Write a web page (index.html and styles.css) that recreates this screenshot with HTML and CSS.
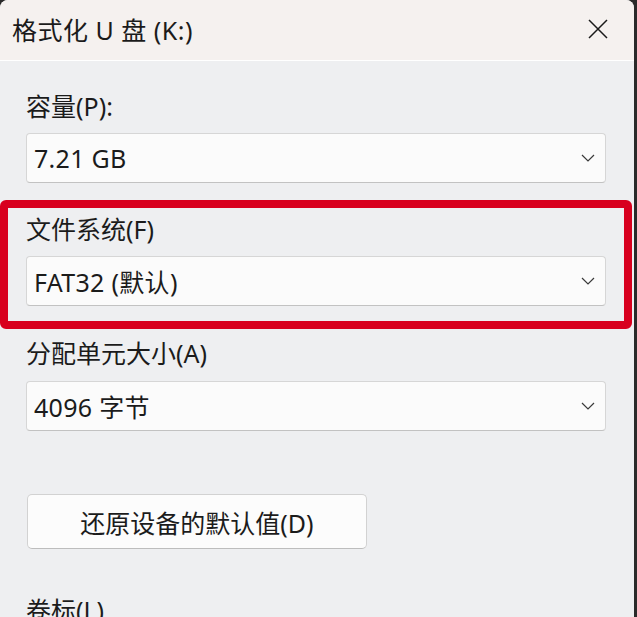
FILE: index.html
```html
<!DOCTYPE html>
<html lang="zh-CN">
<head>
  <meta charset="UTF-8">
  <title>格式化 U 盘 (K:)</title>
  <link rel="stylesheet" href="styles.css">
</head>
<body>

  <div class="window">
    <div class="titlebar">
      <span class="title">格式化 U 盘 (K:)</span>
      <svg class="close" width="20" height="20" viewBox="0 0 20 20">
        <path d="M1 1 L19 19 M19 1 L1 19" stroke="#1a1a1a" stroke-width="1.5" fill="none" />
      </svg>
    </div>

    <div class="content">
      <div class="field first">
        <label>容量(P):</label>
        <div class="select">
          <span>7.21 GB</span>
          <svg width="14" height="8" viewBox="0 0 14 8"><path d="M1 1 L7 7 L13 1" stroke="#3a3a3a" stroke-width="1.2" fill="none" /></svg>
        </div>
      </div>

      <div class="field highlight">
        <label>文件系统(F)</label>
        <div class="select">
          <span>FAT32 (默认)</span>
          <svg width="14" height="8" viewBox="0 0 14 8"><path d="M1 1 L7 7 L13 1" stroke="#3a3a3a" stroke-width="1.2" fill="none" /></svg>
        </div>
      </div>

      <div class="field unit">
        <label>分配单元大小(A)</label>
        <div class="select">
          <span>4096 字节</span>
          <svg width="14" height="8" viewBox="0 0 14 8"><path d="M1 1 L7 7 L13 1" stroke="#3a3a3a" stroke-width="1.2" fill="none" /></svg>
        </div>
      </div>

      <div class="field">
        <button class="restore">还原设备的默认值(D)</button>
      </div>

      <div class="field volume">
        <label>卷标(L)</label>
      </div>
    </div>
  </div>

</body>
</html>
```

FILE: styles.css
```css
html, body {
  margin: 0;
  padding: 0;
  height: 100%;
  overflow: hidden;
}
body {
  background-color: #2a2a2a;
  font-family: "Noto Sans", "Noto Sans CJK SC", sans-serif;
  color: #1b1b1b;
}
.window {
  width: 634px;
  height: 100%;
  background: #eeeff1;
  border-radius: 8px 8px 0 0;
  overflow: hidden;
}
.titlebar {
  height: 60px;
  background: #f5f1ef;
  border-bottom: 1px solid #ffffff;
  display: flex;
  align-items: center;
  justify-content: space-between;
  padding: 0 26px 0 12px;
}
.title {
  font-size: 25px;
  letter-spacing: 0.5px;
  margin-top: -2px;
}
.close {
  margin-top: -2px;
}
.content {
  display: flex;
  flex-direction: column;
}
.field {
  padding: 0 28px 0 26px;
}
.field label {
  display: block;
  font-size: 25px;
  line-height: 30px;
  margin-bottom: 12px;
}
.first {
  margin-top: 30px;
}
.select {
  height: 48px;
  background: #fbfbfb;
  border: 1px solid #d6d6d6;
  border-bottom-color: #c2c2c2;
  border-radius: 4px;
  display: flex;
  align-items: center;
  justify-content: space-between;
  padding: 0 10px 0 7px;
  font-size: 25px;
  letter-spacing: 0.3px;
}
.highlight {
  margin: 17px 2px 0 0;
  border: 8px solid #d8001e;
  border-radius: 6px;
  padding: 6px 18px 15px 18px;
}
.highlight label {
  margin-bottom: 12px;
}
.unit {
  margin-top: 9px;
}
.unit label {
  margin-bottom: 13px;
}
.restore {
  margin: 63px 0 0 1px;
  width: 340px;
  height: 55px;
  background: #fcfcfc;
  border: 1px solid #d2d2d2;
  border-bottom-color: #bdbdbd;
  border-radius: 5px;
  font-family: "Noto Sans", "Noto Sans CJK SC", sans-serif;
  font-size: 25px;
  color: #1b1b1b;
}
.volume {
  margin-top: 46px;
}
```
